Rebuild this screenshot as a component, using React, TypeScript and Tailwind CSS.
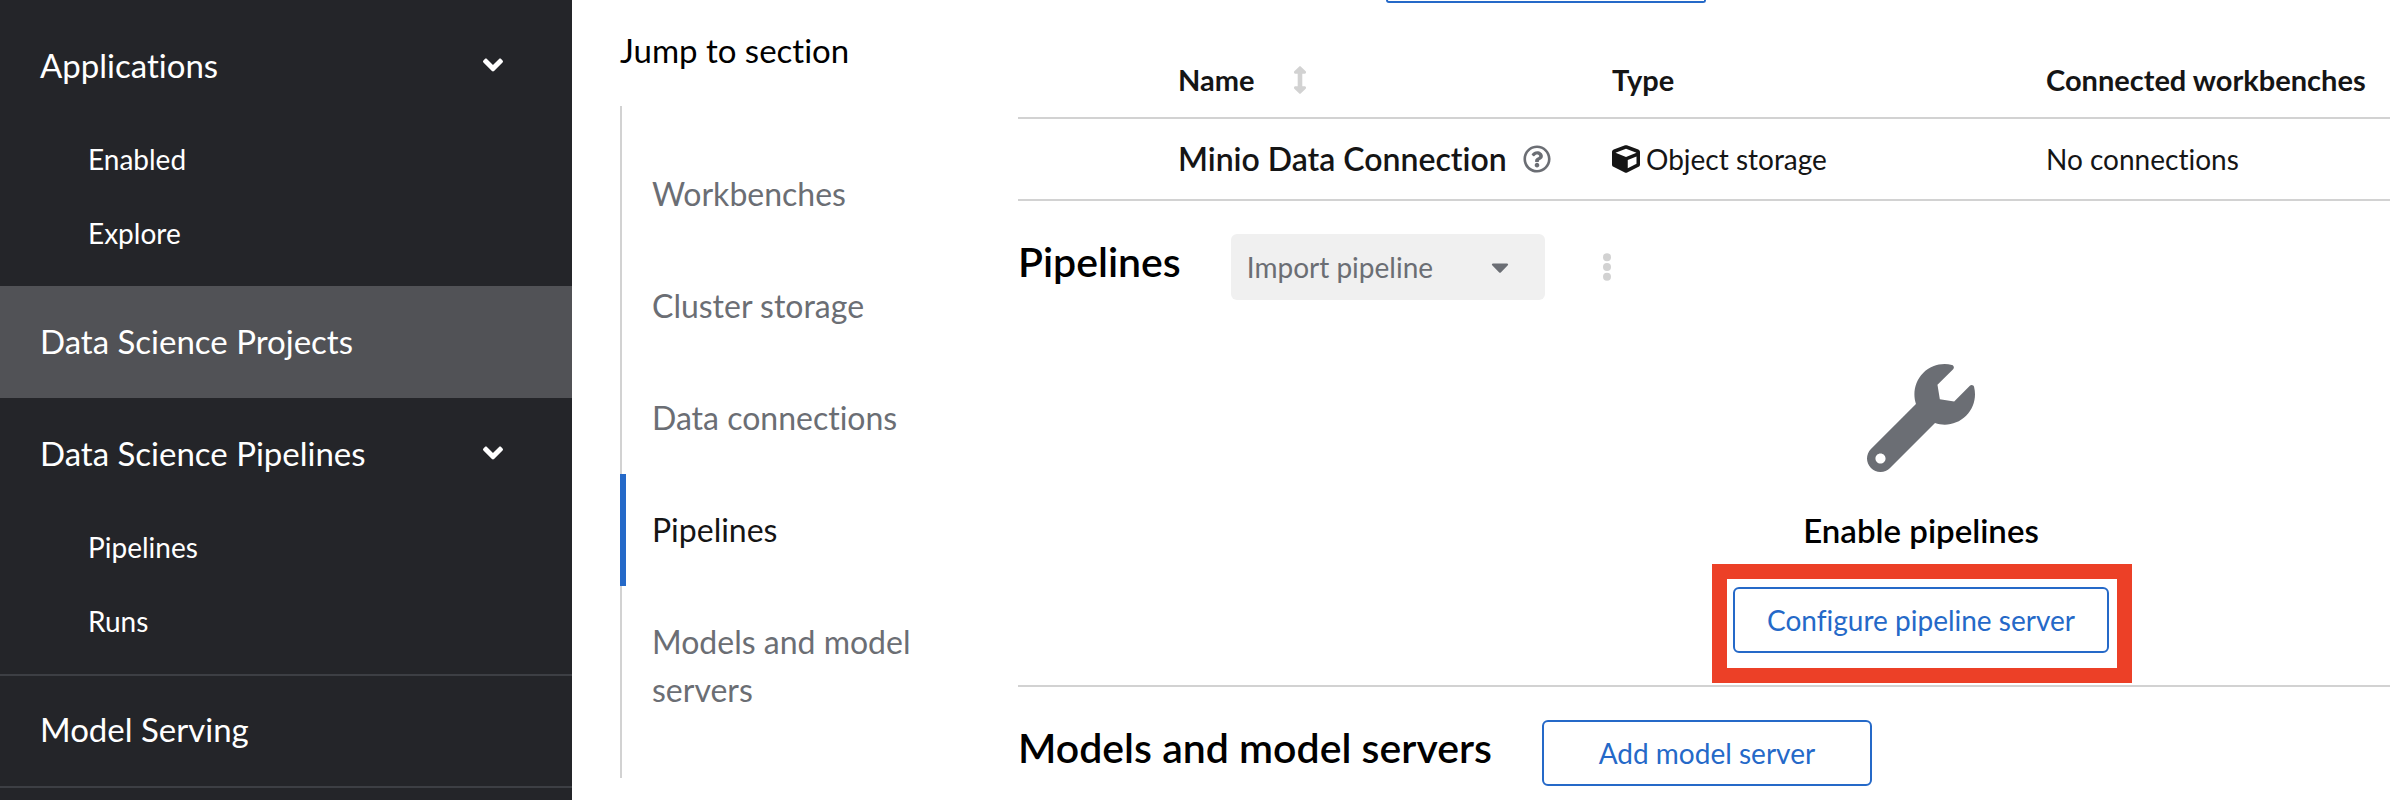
import { FaAngleDown, FaCube, FaRegQuestionCircle, FaCaretDown, FaWrench } from "react-icons/fa";

const sections = ["Workbenches", "Cluster storage", "Data connections", "Pipelines", "Models and model servers"];

function SortIcon() {
  return (
    <svg viewBox="0 0 12 28" className="h-7 w-3 text-[#d2d2d2]" fill="currentColor" role="img" aria-label="Sort">
      <path d="M5.3.4a1 1 0 0 1 1.4 0l5 4.9c.7.8.2 2.4-1 2.4H8.3v12.6h2.4c1.2 0 1.7 1.6 1 2.4l-5 4.9a1 1 0 0 1-1.4 0l-5-4.9c-.7-.8-.2-2.4 1-2.4h2.4V7.7H1.300c-1.200 0-1.700-1.600-1-2.400z" />
    </svg>
  );
}

function KebabIcon() {
  return (
    <svg viewBox="0 0 8 28" className="h-7 w-2" fill="currentColor" aria-hidden="true">
      <circle cx="4" cy="4.2" r="4" />
      <circle cx="4" cy="14" r="4" />
      <circle cx="4" cy="23.8" r="4" />
    </svg>
  );
}

function NavGroup({ title, items }: { title: string; items: string[] }) {
  return (
    <li>
      <button type="button" aria-expanded="true" className="flex w-full items-center justify-between pb-[33px] pl-10 pr-[69px] pt-[31px] text-left">
        <span>{title}</span>
        <FaAngleDown className="h-8 w-5" aria-hidden="true" />
      </button>
      <ul className="pb-4 text-[28px] leading-[42px]">
        {items.map((item) => (
          <li key={item}>
            <a href="#" className="block py-4 pl-[88px]">{item}</a>
          </li>
        ))}
      </ul>
    </li>
  );
}

export default function App() {
  return (
    <div className="flex h-screen overflow-hidden bg-white font-['Lato',sans-serif] text-[#151515] [font-variant-ligatures:none]">
      <nav aria-label="Global" className="w-[572px] shrink-0 overflow-hidden bg-[#242529] pt-[10px] text-[33px] leading-[48px] text-white">
        <ul>
          <NavGroup title="Applications" items={["Enabled", "Explore"]} />
          <li>
            <a href="#" aria-current="page" className="block bg-[#515256] pb-[33px] pl-10 pt-[31px]">Data Science Projects</a>
          </li>
          <NavGroup title="Data Science Pipelines" items={["Pipelines", "Runs"]} />
          <li className="border-y-2 border-[#3d3f44]">
            <a href="#" className="block pb-[33px] pl-10 pt-[29px]">Model Serving</a>
          </li>
        </ul>
      </nav>

      <aside className="w-[446px] shrink-0 px-12 pt-[26px] text-[32px] leading-[48px]">
        <h2 id="jump" className="text-[33px] text-black">Jump to section</h2>
        <nav aria-labelledby="jump" className="mt-8">
          <ul className="border-l-2 border-[#d2d2d2] py-8">
            {sections.map((s) => (
              <li key={s} className="-ml-0.5">
                <a
                  href="#"
                  className={
                    s === "Pipelines"
                      ? "block border-l-[6px] border-[#2569c8] py-8 pl-[26px] text-[#151515]"
                      : "block py-8 pl-8 text-[#6b6e74]"
                  }
                >
                  {s}
                </a>
              </li>
            ))}
          </ul>
        </nav>
      </aside>

      <main className="min-w-0 flex-1 overflow-hidden">
        <div className="min-w-[1806px]">
          <div className="ml-[368px] h-[3px] w-80 rounded-b-md border-2 border-t-0 border-[#2569c8]" />
          <table className="w-full table-fixed border-collapse text-left text-[28px] leading-[42px]">
            <colgroup>
              <col className="w-40" />
              <col className="w-[434px]" />
              <col className="w-[434px]" />
              <col />
            </colgroup>
            <thead className="text-[29px]">
              <tr className="h-[115px] border-b-2 border-[#d2d2d2]">
                <td />
                <th className="pt-10 font-bold">
                  <button type="button" className="flex items-center gap-10">
                    Name
                    <SortIcon />
                  </button>
                </th>
                <th className="pt-10 font-bold">Type</th>
                <th className="pt-10 font-bold">Connected workbenches</th>
              </tr>
            </thead>
            <tbody>
              <tr className="h-[82px] border-b-2 border-[#d2d2d2]">
                <td />
                <td>
                  <span className="flex items-center gap-4">
                    <span className="text-[32px] font-semibold">Minio Data Connection</span>
                    <FaRegQuestionCircle className="size-7 text-[#6b6e74]" aria-label="More info" />
                  </span>
                </td>
                <td>
                  <span className="flex items-center gap-1.5">
                    <FaCube className="size-7" aria-hidden="true" />
                    Object storage
                  </span>
                </td>
                <td>No connections</td>
              </tr>
            </tbody>
          </table>

          <section className="border-b-2 border-[#d2d2d2]">
            <div className="flex items-start pt-[33px]">
              <h2 className="text-[41px] font-semibold leading-[56px] text-black">Pipelines</h2>
              <button type="button" disabled className="ml-[50px] flex h-[66px] w-[314px] items-center justify-between rounded-md bg-[#f0f0f0] pl-4 pr-9 text-[28px] text-[#6b6e74]">
                Import pipeline
                <FaCaretDown className="h-7 w-[18px]" aria-hidden="true" />
              </button>
              <button type="button" aria-label="Actions" disabled className="ml-[58px] flex h-[66px] items-center text-[#d2d2d2]">
                <KebabIcon />
              </button>
            </div>
            <div className="flex flex-col items-center pb-0.5 pt-16">
              <FaWrench className="size-[108px] text-[#6b6e74]" aria-hidden="true" />
              <h3 className="mt-[34px] text-[33px] font-semibold leading-[48px] text-black">Enable pipelines</h3>
              <div className="ml-0.5 mt-2.5 border-[15px] border-[#ec4027] pb-[15px] pl-1.5 pr-2 pt-2">
                <button type="button" className="h-[66px] w-[376px] rounded-md border-2 border-[#2569c8] text-[28px] text-[#2569c8]">
                  Configure pipeline server
                </button>
              </div>
            </div>
          </section>

          <section className="flex items-start gap-[50px] pt-[33px]">
            <h2 className="text-[41px] font-semibold leading-[56px] text-black">Models and model servers</h2>
            <button type="button" className="h-[66px] w-[330px] rounded-md border-2 border-[#2569c8] text-[28px] text-[#2569c8]">
              Add model server
            </button>
          </section>
        </div>
      </main>
    </div>
  );
}
